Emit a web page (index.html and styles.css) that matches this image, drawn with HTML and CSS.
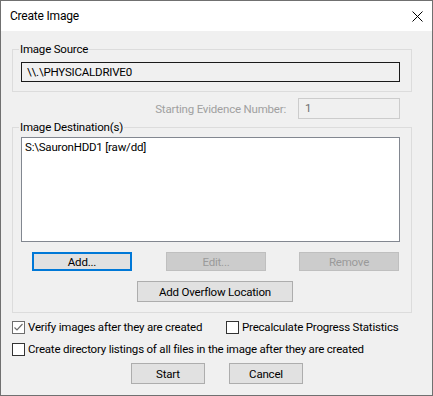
FILE: index.html
```html
<!DOCTYPE html>
<html lang="en">
<head>
    <meta charset="UTF-8">
    <meta name="viewport" content="width=device-width, initial-scale=1.0">
    <title>Create Image</title>
    <link rel="stylesheet" href="styles.css">
</head>
<body>
    <div class="dialog">
        <div class="titlebar">
            <span class="title">Create Image</span>
            <svg class="close" width="11" height="11" viewBox="0 0 11 11">
                <path d="M0.5 0.5 L10.5 10.5 M10.5 0.5 L0.5 10.5" stroke="#000" stroke-width="1" fill="none"/>
            </svg>
        </div>
        <div class="content">
            <fieldset class="group source-group">
                <legend>Image Source</legend>
                <div class="field source-field">\\.\PHYSICALDRIVE0</div>
            </fieldset>

            <div class="evidence-row">
                <span class="disabled-label">Starting Evidence Number:</span>
                <div class="field evidence-field">1</div>
            </div>

            <fieldset class="group dest-group">
                <legend>Image Destination(s)</legend>
                <div class="listbox">
                    <div class="list-item">S:\SauronHDD1 [raw/dd]</div>
                </div>
                <div class="button-row">
                    <button class="btn btn-default">Add...</button>
                    <button class="btn" disabled>Edit...</button>
                    <button class="btn" disabled>Remove</button>
                </div>
                <div class="overflow-row">
                    <button class="btn btn-overflow">Add Overflow Location</button>
                </div>
            </fieldset>

            <div class="check-row">
                <label class="check check-first">
                    <span class="box box-checked">
                        <svg width="11" height="11" viewBox="0 0 11 11">
                            <path d="M1.5 5.5 L4 8 L9.5 2" stroke="#6d6d6d" stroke-width="1.2" fill="none"/>
                        </svg>
                    </span>
                    Verify images after they are created
                </label>
                <label class="check check-second">
                    <span class="box"></span>
                    Precalculate Progress Statistics
                </label>
            </div>
            <div class="check-row">
                <label class="check">
                    <span class="box"></span>
                    Create directory listings of all files in the image after they are created
                </label>
            </div>

            <div class="actions">
                <button class="btn btn-action">Start</button>
                <button class="btn btn-action">Cancel</button>
            </div>
        </div>
    </div>
</body>
</html>
```

FILE: styles.css
```css
* {
    box-sizing: border-box;
}

body {
    margin: 0;
    font-family: Roboto, "Liberation Sans", sans-serif;
    font-size: 11.5px;
    letter-spacing: -0.2px;
    color: #000;
}

.dialog {
    width: 433px;
    height: 396px;
    border: 1px solid #707070;
    background-color: #f0f0f0;
}

.titlebar {
    height: 30px;
    background-color: #fff;
    display: flex;
    align-items: center;
    justify-content: space-between;
    padding: 0 9px 0 9px;
}

.title {
    font-size: 12px;
}

.close {
    display: block;
    margin-top: 1px;
}

.content {
    padding: 10px 0 0 11px;
}

.group {
    width: 400px;
    margin: 0;
    border: 1px solid #dcdcdc;
    padding: 5px 10px 9px 8px;
    min-width: 0;
}

.group legend {
    padding: 0 1px;
    margin-left: -2px;
    line-height: 16px;
}

.field {
    height: 20px;
    line-height: 18px;
    padding-left: 5px;
    border: 1px solid #1a1a1a;
}

.source-field {
    width: 379px;
}

.evidence-row {
    width: 388px;
    margin-top: 6px;
    display: flex;
    justify-content: flex-end;
    align-items: center;
    gap: 12px;
}

.disabled-label {
    color: #a0a0a0;
}

.evidence-field {
    width: 102px;
    height: 21px;
    line-height: 19px;
    padding-left: 6px;
    border-color: #cccccc;
    color: #6d6d6d;
}

.dest-group {
    padding-top: 2px;
    padding-bottom: 10px;
}

.listbox {
    width: 379px;
    height: 105px;
    background-color: #fff;
    border: 1px solid #828790;
}

.list-item {
    padding: 1px 3px;
    line-height: 16px;
}

.button-row {
    display: flex;
    margin-top: 10px;
    padding-left: 11px;
    gap: 34px;
}

.btn {
    font-family: inherit;
    font-size: inherit;
    letter-spacing: inherit;
    color: #000;
    background-color: #e1e1e1;
    border: 1px solid #adadad;
    padding: 0;
    margin: 0;
    width: 100px;
    height: 19px;
    line-height: 16px;
}

.btn-default {
    border: 2px solid #0078d7;
}

.btn:disabled {
    background-color: #cccccc;
    border-color: #bfbfbf;
    color: #9a9a9a;
}

.button-row .btn:last-child {
    margin-left: -1px;
}

.overflow-row {
    margin-top: 10px;
    padding-left: 116px;
}

.btn-overflow {
    width: 156px;
    height: 21px;
}

.check-row {
    display: flex;
    margin-top: 6px;
    line-height: 16px;
}

.check {
    display: flex;
    align-items: center;
    gap: 3px;
    white-space: nowrap;
}

.check-first {
    width: 214px;
}

.box {
    width: 13px;
    height: 13px;
    border: 1px solid #333;
    background-color: #fff;
    display: flex;
    align-items: center;
    justify-content: center;
    flex-shrink: 0;
}

.box-checked {
    border-color: #6d6d6d;
}

.box-checked svg {
    display: block;
}

.actions {
    display: flex;
    margin-top: 6px;
    padding-left: 119px;
    gap: 24px;
}

.btn-action {
    width: 74px;
    height: 21px;
}
```
